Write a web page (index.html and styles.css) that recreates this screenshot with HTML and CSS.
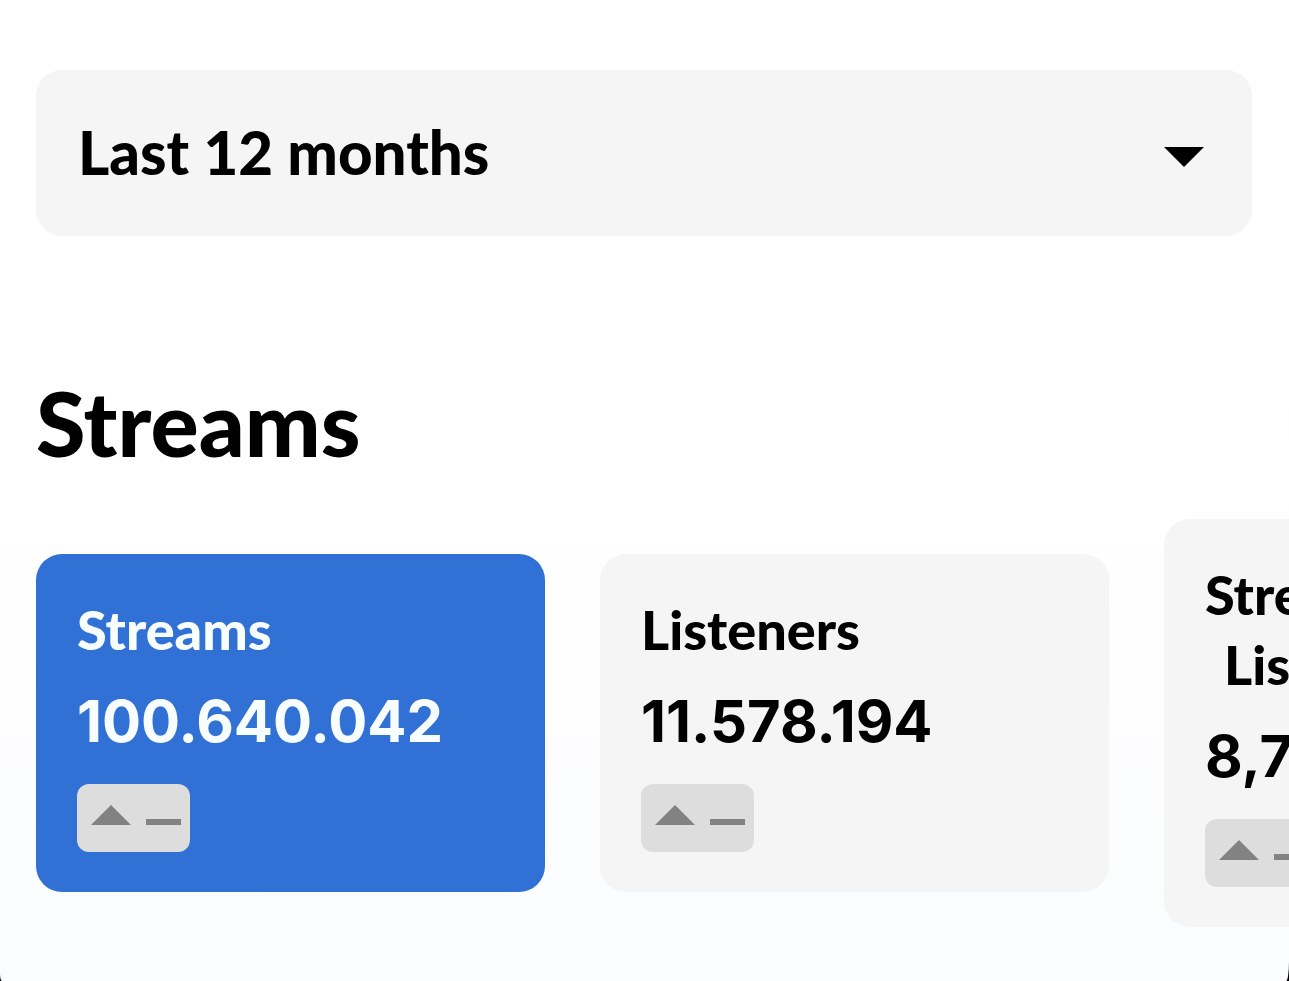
FILE: index.html
```html
<!DOCTYPE html>
<html lang="en">
<head>
    <meta charset="utf-8">
    <meta name="viewport" content="width=device-width, initial-scale=1">
    <title>Streams</title>
    <link rel="stylesheet" href="styles.css">
</head>
<body>
    <main class="page">
        <div class="period">
            <select class="period-select" aria-label="Period">
                <option>Last 12 months</option>
            </select>
            <svg class="period-arrow" viewBox="0 0 40 20" aria-hidden="true"><path d="M0 0h40L20 20z"/></svg>
        </div>

        <h1>Streams</h1>

        <div class="cards">
            <button class="card active" type="button" aria-pressed="true">
                <span class="label">Streams</span>
                <span class="value">100.640.042</span>
                <span class="change">
                    <svg class="change-icon" viewBox="0 0 90 20" aria-hidden="true"><path d="M0 20L20 0l20 20zM55 14h35v6H55z"/></svg>
                </span>
            </button>
            <button class="card" type="button" aria-pressed="false">
                <span class="label">Listeners</span>
                <span class="value">11.578.194</span>
                <span class="change">
                    <svg class="change-icon" viewBox="0 0 90 20" aria-hidden="true"><path d="M0 20L20 0l20 20zM55 14h35v6H55z"/></svg>
                </span>
            </button>
            <button class="card" type="button" aria-pressed="false">
                <span class="label">Streams /<br>Listener</span>
                <span class="value">8,7</span>
                <span class="change">
                    <svg class="change-icon" viewBox="0 0 90 20" aria-hidden="true"><path d="M0 20L20 0l20 20zM55 14h35v6H55z"/></svg>
                </span>
            </button>
        </div>
    </main>
</body>
</html>
```

FILE: styles.css
```css
* {
    box-sizing: border-box;
}
body {
    margin: 0;
    background: #000;
    color: #000;
    font-family: Lato, sans-serif;
    font-weight: 900;
}
.page {
    min-height: 100vh;
    padding: 70px 0 53px 36px;
    overflow: hidden;
    background: linear-gradient(#fff 40%, #fbfcff);
    border-radius: 0 0 3px 2px / 0 0 20px 7px;
}

/* period drop-down */
.period {
    position: relative;
    margin-right: 37px;
}
.period-select {
    display: block;
    width: 100%;
    height: 166px;
    padding: 0 42px 2px;
    border: none;
    border-radius: 26px;
    background: #f5f5f5;
    color: inherit;
    font: inherit;
    font-size: 60px;
    appearance: none;
    cursor: pointer;
}
.period-arrow {
    position: absolute;
    top: 77px;
    right: 48px;
    width: 40px;
    height: 20px;
    pointer-events: none;
}

h1 {
    margin: 134px 0 45px;
    font-size: 90px;
    font-weight: 900;
    line-height: 104px;
}

/* stat cards */
.cards {
    display: flex;
    align-items: center;
    gap: 55px;
    overflow: hidden;
}
.card {
    display: flex;
    flex-direction: column;
    flex: 0 0 509px;
    align-items: flex-start;
    padding: 41px 41px 40px;
    border: none;
    border-radius: 26px;
    background: #f5f5f5;
    color: inherit;
    font: inherit;
    cursor: pointer;
}
.card.active {
    background: #3171d6;
    color: #f8fdff;
}
.label {
    font-size: 54px;
    line-height: 70px;
    text-align: center;
}
.value {
    margin: 11px 0 18px;
    font-family: Inter, sans-serif;
    font-size: 58px;
    font-weight: 700;
    line-height: 90px;
}
.change {
    display: flex;
    width: 113px;
    height: 68px;
    padding: 21px 9px 0 14px;
    border-radius: 12px;
    background: #ddd;
}
.change-icon {
    width: 90px;
    height: 20px;
    fill: #828282;
}
```
